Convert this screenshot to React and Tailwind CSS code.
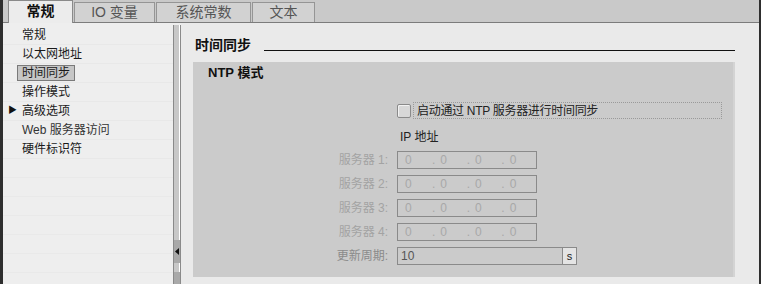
const tabs = [
  { label: "常规", width: "w-[65px]", active: true },
  { label: "IO 变量", width: "w-[81px]" },
  { label: "系统常数", width: "w-[95px]" },
  { label: "文本", width: "w-[63px]" },
];

const navItems = ["常规", "以太网地址", "时间同步", "操作模式", "高级选项", "Web 服务器访问", "硬件标识符"];

const TabBar = () => (
  <div className="flex h-[23px] shrink-0 items-end gap-[1px] border-b border-[#7c7c7c] bg-[#c9c9c9] pl-[5px]">
    {tabs.map((tab) =>
      tab.active ? (
        <div
          key={tab.label}
          className={`relative -mb-px flex h-[23px] ${tab.width} items-center justify-center border border-b-0 border-[#8a8a8a] bg-[#ececec] pb-[1px] text-[14px] font-bold text-[#111]`}
        >
          {tab.label}
        </div>
      ) : (
        <div
          key={tab.label}
          className={`flex h-[20px] ${tab.width} items-center justify-center border border-b-0 border-[#959595] bg-[#d2d2d2] text-[14px] text-[#555]`}
        >
          {tab.label}
        </div>
      )
    )}
  </div>
);

const Nav = () => (
  <div className="flex w-[170px] shrink-0 flex-col bg-[#eeeeee] pt-[3px]">
    {navItems.map((item, i) => (
      <div key={item} className="flex h-[19px] shrink-0 items-center border-b border-[#e8e8e8]">
        {i === 2 ? (
          <>
            <span className="w-[14px]" />
            <span className="flex h-[16px] items-center border border-[#7a7a7a] bg-[#c6c6c6] px-[4px]">{item}</span>
          </>
        ) : (
          <>
            <span className="flex w-[19px] justify-end pr-[5px] text-[9px] text-[#111]">{i === 4 ? "▶" : ""}</span>
            <span className={i === 5 ? "text-[#333]" : ""}>{item}</span>
          </>
        )}
      </div>
    ))}
    {[0, 1, 2, 3, 4, 5].map((n) => (
      <div key={n} className="h-[19px] shrink-0 border-b border-[#e9e9e9]" />
    ))}
  </div>
);

const Splitter = () => (
  <div className="flex w-[8px] shrink-0 flex-col bg-[#eeeeee] pt-[2px]">
    <div className="flex flex-1 flex-col border-l border-r border-[#8a8a8a] bg-[#c8c8c8] shadow-[inset_-1px_0_0_#ffffff]">
      <div className="h-[215px]" />
      <div className="flex h-[23px] items-center justify-center bg-[#a9a9a9]">
        <svg width="4" height="7" viewBox="0 0 4 7">
          <path d="M4 0 L0 3.5 L4 7 Z" fill="#111" />
        </svg>
      </div>
      <div className="h-[9px]" />
      <div className="flex-1 bg-[#a9a9a9]" />
    </div>
  </div>
);

const IpBox = () => (
  <div className="flex h-[18px] w-[140px] items-center border border-[#8a8a8a] text-[12px] text-[#a8a8a8]">
    <span className="w-[35px] pl-[7px]">0</span>
    {[0, 1, 2].map((n) => (
      <span key={n} className="w-[36px]">
        .<span className="ml-[5px]">0</span>
      </span>
    ))}
  </div>
);

const Row = ({ label, dark, children }) => (
  <div className="flex h-[18px] items-center">
    <div className={`w-[195px] text-right ${dark ? "text-[#8a8a8a]" : "text-[#a3a3a3]"}`}>{label}</div>
    <div className="ml-[9px] flex">{children}</div>
  </div>
);

const Content = () => (
  <div className="flex min-w-0 flex-1 flex-col bg-[#eaeaea] pl-[12px] pr-[24px] pt-[13px]">
    <div className="flex h-[18px] items-end pl-[2px]">
      <span className="text-[14px] leading-[18px] font-bold text-[#111]">时间同步</span>
      <span className="mb-[3px] ml-[13px] h-px flex-1 bg-[#111]" />
    </div>
    <div className="mt-[8px] flex h-[215px] flex-col bg-[#cbcbcb] shadow-[inset_-2px_0_0_#d4d4d4]">
      <div className="h-[18px] pl-[15px] pt-[2px] text-[13px] leading-[18px] font-bold text-[#111]">NTP 模式</div>
      <div className="mt-[22px] flex h-[17px] items-center pl-[204px] pr-[13px]">
        <span className="h-[14px] w-[14px] rounded-[2px] border border-[#8a8a8a] bg-[#d8d8d8] shadow-[inset_1px_1px_0_#f2f2f2]" />
        <span className="ml-[2px] flex h-[17px] flex-1 items-center border border-dotted border-[#9a9a9a] pl-[3px] tracking-[-0.3px] text-[#222]">
          启动通过 NTP 服务器进行时间同步
        </span>
      </div>
      <div className="mt-[9px] h-[18px] pl-[207px] leading-[18px] text-[#222]">IP 地址</div>
      <div className="mt-[5px] flex flex-col gap-[6px]">
        <Row label="服务器 1:"><IpBox /></Row>
        <Row label="服务器 2:"><IpBox /></Row>
        <Row label="服务器 3:"><IpBox /></Row>
        <Row label="服务器 4:"><IpBox /></Row>
        <Row label="更新周期:" dark>
          <div className="flex h-[18px] w-[180px] items-center border border-[#8a8a8a]">
            <span className="flex-1 pl-[3px] text-[#555]">10</span>
            <span className="flex h-full w-[14px] items-center justify-center border-l border-[#8a8a8a] bg-[#e4e4e4] text-[11px] text-[#222]">s</span>
          </div>
        </Row>
      </div>
    </div>
  </div>
);

export default function App() {
  return (
    <div className="flex h-[284px] w-[761px] overflow-hidden bg-[#2e2e2e] font-['Liberation_Sans','Noto_Sans_CJK_SC',sans-serif] text-[12px] text-[#1a1a1a]">
      <div className="ml-[3px] mr-[2px] flex min-w-0 flex-1 flex-col">
        <TabBar />
        <div className="flex min-h-0 flex-1 overflow-hidden">
          <Nav />
          <Splitter />
          <Content />
        </div>
      </div>
    </div>
  );
}
